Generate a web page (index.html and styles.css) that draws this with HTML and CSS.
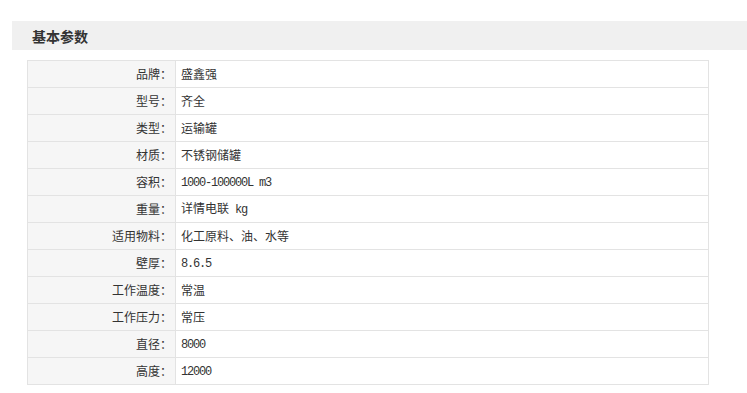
FILE: index.html
```html
<!DOCTYPE html>
<html lang="zh-CN">
<head>
<meta charset="utf-8">
<title>基本参数</title>
<link rel="stylesheet" href="styles.css">
</head>
<body>
<div class="section-head"><h2 class="section-title">基本参数</h2></div>
<table class="params">
<tbody>
<tr><th>品牌：</th><td>盛鑫强</td></tr>
<tr><th>型号：</th><td>齐全</td></tr>
<tr><th>类型：</th><td>运输罐</td></tr>
<tr><th>材质：</th><td>不锈钢储罐</td></tr>
<tr><th>容积：</th><td><span class="mono">1000-100000L m3</span></td></tr>
<tr><th>重量：</th><td>详情电联<span class="mono"> kg</span></td></tr>
<tr><th>适用物料：</th><td>化工原料、油、水等</td></tr>
<tr><th>壁厚：</th><td><span class="mono">8.6.5</span></td></tr>
<tr><th>工作温度：</th><td>常温</td></tr>
<tr><th>工作压力：</th><td>常压</td></tr>
<tr><th>直径：</th><td><span class="mono">8000</span></td></tr>
<tr><th>高度：</th><td><span class="mono">12000</span></td></tr>
</tbody>
</table>
</body>
</html>
```
FILE: styles.css
```css
html, body {
  margin: 0;
  padding: 0;
  background: #fff;
}
body {
  font-family: "Noto Sans CJK SC", "Liberation Sans", sans-serif;
  color: #333;
  font-size: 12px;
}
.section-head {
  margin: 21px 0 0 12px;
  height: 29px;
  background: #f0f0f0;
  display: flex;
  align-items: center;
  padding-left: 20px;
}
.section-title {
  margin: 0;
  font-size: 14px;
  font-weight: bold;
  color: #333;
  line-height: 1;
}
.params {
  margin: 10px 0 0 27px;
  width: 682px;
  border-collapse: collapse;
  border: 1px solid #e3e3e3;
}
.params th,
.params td {
  border: 1px solid #e3e3e3;
  height: 26px;
  padding: 0;
  line-height: 16px;
  font-weight: normal;
  vertical-align: middle;
}
.params th {
  width: 144px;
  text-align: right;
  padding-right: 3px;
  background: #f6f6f6;
}
.params td {
  text-align: left;
  padding-left: 5px;
  background: #fff;
}
.mono {
  font-family: "Liberation Mono", monospace;
  letter-spacing: -1.2px;
  line-height: 16px;
}
```
